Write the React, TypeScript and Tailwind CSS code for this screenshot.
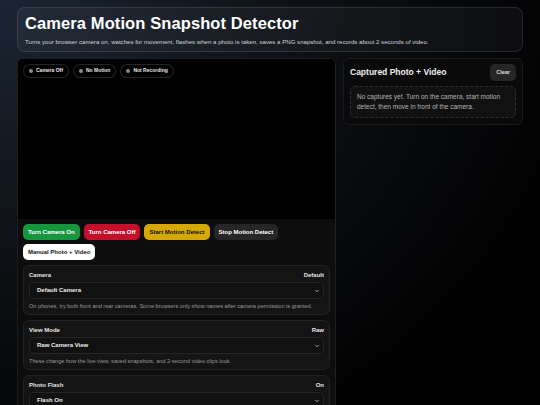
import { ChevronDown } from 'lucide-react';

const pills = ['Camera Off', 'No Motion', 'Not Recording'];

const buttons = [
  { label: 'Turn Camera On', cls: 'bg-[#16963f] text-white' },
  { label: 'Turn Camera Off', cls: 'bg-[#c5102c] text-white' },
  { label: 'Start Motion Detect', cls: 'bg-[#d6a806] text-[#111]' },
  { label: 'Stop Motion Detect', cls: 'bg-[#262626] text-white' },
];

const sections = [
  {
    label: 'Camera',
    value: 'Default',
    select: 'Default Camera',
    help: 'On phones, try both front and rear cameras. Some browsers only show names after camera permission is granted.',
  },
  {
    label: 'View Mode',
    value: 'Raw',
    select: 'Raw Camera View',
    help: 'These change how the live view, saved snapshots, and 2-second video clips look.',
  },
  {
    label: 'Photo Flash',
    value: 'On',
    select: 'Flash On',
    help: 'A white flash shows on screen when a photo is taken.',
  },
];

function Section({ label, value, select, help }: (typeof sections)[number]) {
  return (
    <div className="rounded-[6px] border border-[#232323] bg-[#141414] px-[5px] pt-[5px] pb-[4px]">
      <div className="flex items-center justify-between text-[6px] font-bold leading-[8px] text-[#e5e5e5]">
        <span>{label}</span>
        <span>{value}</span>
      </div>
      <div className="mt-[3px] flex h-[17px] items-center justify-between rounded-[5px] border border-[#262626] bg-[#111] pl-[7px] pr-[3px] text-[6px] font-bold text-[#eee]">
        <span>{select}</span>
        <ChevronDown size={6} strokeWidth={3} className="text-[#ccc]" />
      </div>
      <p className="mt-[3px] text-[5.6px] leading-[8px] text-[#9a9a9a]">{help}</p>
    </div>
  );
}

export default function App() {
  return (
    <div
      className="min-h-screen bg-[radial-gradient(ellipse_at_top_left,#1b2533_0%,#0c0e12_45%,#000_80%)] px-[17px] pt-[7px] pb-4 text-white"
      style={{ fontFamily: '"Liberation Sans", Arial, sans-serif' }}
    >
      {/* header */}
      <div className="h-[45px] rounded-[8px] border border-[#ffffff1c] bg-[#ffffff0a] px-[7px] pt-[5px]">
        <h1 className="text-[16.5px] font-bold leading-[20px] tracking-[0.1px]">Camera Motion Snapshot Detector</h1>
        <p className="mt-[5px] text-[6.1px] leading-[8px] text-[#cfd3d8]">
          Turns your browser camera on, watches for movement, flashes when a photo is taken, saves a PNG snapshot, and records about 2 seconds of video.
        </p>
      </div>

      <div className="mt-[6px] flex items-start gap-[7px]">
        {/* left: camera + controls */}
        <div className="w-[319px] overflow-hidden rounded-[6px] border border-[#1e1e1e] bg-[#0d0d0d]">
          <div className="relative h-[160px] bg-black">
            <div className="absolute left-[5px] top-[5px] flex gap-[4px]">
              {pills.map(p => (
                <div
                  key={p}
                  className="flex h-[14px] items-center gap-[3px] rounded-full border border-[#ffffff24] bg-[#00000080] px-[5px] text-[5px] font-bold text-[#e5e5e5]"
                >
                  <span className="h-[4px] w-[4px] rounded-full bg-[#8a8a8a]" />
                  {p}
                </div>
              ))}
            </div>
          </div>

          <div className="px-[5px] pt-[5px]">
            <div className="flex flex-wrap gap-[4px]">
              {buttons.map(b => (
                <button key={b.label} className={`h-[16px] rounded-[5px] px-[5px] text-[6px] font-bold ${b.cls}`}>
                  {b.label}
                </button>
              ))}
              <button className="h-[16px] rounded-[5px] bg-white px-[5px] text-[6px] font-bold text-[#111]">
                Manual Photo + Video
              </button>
            </div>

            <div className="mt-[5px] flex flex-col gap-[5px] pb-[6px]">
              {sections.map(s => (
                <Section key={s.label} {...s} />
              ))}
            </div>
          </div>
        </div>

        {/* right: captures */}
        <div className="w-[180px] rounded-[6px] border border-[#1c1c1c] bg-[#0a0a0a] px-[6px] pt-[5px] pb-[6px]">
          <div className="flex items-center justify-between">
            <h2 className="text-[8.5px] font-bold text-[#eee]">Captured Photo + Video</h2>
            <button className="h-[17px] rounded-[5px] bg-[#262626] px-[6px] text-[5.5px] font-bold text-[#ddd]">Clear</button>
          </div>
          <div className="mt-[5px] rounded-[5px] border border-dashed border-[#ffffff1f] bg-[#ffffff08] px-[6px] py-[5px] text-[6.5px] leading-[10px] text-[#b5b5b5]">
            No captures yet. Turn on the camera, start motion detect, then move in front of the camera.
          </div>
        </div>
      </div>
    </div>
  );
}
